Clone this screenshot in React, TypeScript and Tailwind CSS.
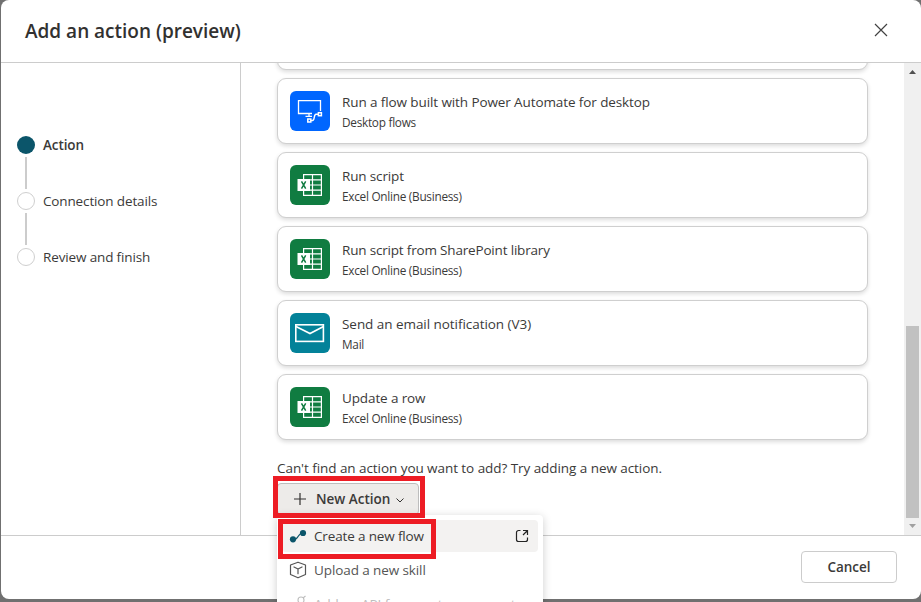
import type { ReactNode } from "react";

function DesktopFlowIcon() {
  return (
    <svg width="40" height="40" viewBox="0 0 40 40" fill="none" stroke="white" className="block">
      <path d="M22 22.5H8.5V9.6H30.5V20" strokeWidth="1.3" />
      <path d="M15.5 25.3H22M19 22.5V25" strokeWidth="1.3" />
      <rect x="17.8" y="28" width="3" height="3" strokeWidth="1.5" />
      <rect x="28.4" y="21.7" width="3" height="3" strokeWidth="1.5" />
      <path d="M21 29.5H22.5C25 29.5 23.5 23.2 26 23.2H28" strokeWidth="1.4" />
    </svg>
  );
}

function ExcelIcon() {
  return (
    <svg width="40" height="40" viewBox="0 0 40 40" fill="none" className="block">
      <path d="M13.6 9.6H31.4V30.4H13.6ZM22.5 9.6V30.4M13.6 14.8H31.4M13.6 20H31.4M13.6 25.2H31.4" stroke="white" strokeWidth="1.2" />
      <rect x="7.5" y="14" width="12.5" height="12" fill="white" />
      <path d="M11.5 16.4L15.7 23.6M15.7 16.4L11.5 23.6" stroke="#107c41" strokeWidth="1.5" />
    </svg>
  );
}

function MailIcon() {
  return (
    <svg width="40" height="40" viewBox="0 0 40 40" fill="none" stroke="white" strokeWidth="1.6" className="block">
      <rect x="5.8" y="11.8" width="27.6" height="16.6" />
      <path d="M6 13.5L20 20.5L33.5 13.5" />
    </svg>
  );
}

type CardProps = { title: string; sub: string; color: string; icon: ReactNode; spacing: string };

function Card({ title, sub, color, icon, spacing }: CardProps) {
  return (
    <div className="flex h-[66px] shrink-0 items-center rounded-[9px] border border-[#cfcfcf] bg-white px-3 shadow-[0_2px_4px_rgba(0,0,0,0.14)]">
      <div className={`size-10 shrink-0 overflow-hidden rounded-md ${color}`}>{icon}</div>
      <div className="ml-3 pt-px whitespace-nowrap">
        <div className={`text-[13.5px] leading-5 ${spacing}`}>{title}</div>
        <div className="text-[11.8px] leading-5 tracking-[-0.27px]">{sub}</div>
      </div>
    </div>
  );
}

function Step({ label, active, last }: { label: string; active?: boolean; last?: boolean }) {
  return (
    <div className={last ? "" : "h-14"}>
      <div className="flex h-[18px] items-center gap-2">
        <span className={`size-[18px] rounded-full ${active ? "bg-[#0b556a]" : "border border-[#cfcfcf]"}`} />
        <span className={`text-[13.5px] leading-[18px] whitespace-nowrap ${active ? "font-semibold tracking-[-0.1px]" : "tracking-[-0.14px]"}`}>{label}</span>
      </div>
      {!last && <div className="mt-[3px] ml-2 h-8 w-0.5 bg-[#cccccc]" />}
    </div>
  );
}

function ActionMenu() {
  return (
    <div className="absolute top-[515px] left-[277px] h-[110px] w-[266px] rounded bg-white p-[5px] shadow-[0_2px_10px_rgba(0,0,0,0.2)]">
      <div className="flex h-8 items-center rounded bg-[#f3f2f1] pr-2 pl-[7px]">
        <svg width="18" height="18" viewBox="0 0 18 18" className="shrink-0">
          <path d="M4 12.5C10 13.5 8 6 14 6" fill="none" stroke="#0b556a" strokeWidth="1.2" />
          <circle cx="4" cy="12.3" r="3.1" fill="#0b556a" />
          <circle cx="14" cy="6" r="3.1" fill="#0b556a" />
        </svg>
        <span className="ml-[7px] text-[13.5px] tracking-[-0.15px]">Create a new flow</span>
        <svg width="16" height="16" viewBox="0 0 16 16" fill="none" stroke="#242424" strokeWidth="1.2" className="ml-auto">
          <path d="M6.5 2.5H4.5A2 2 0 0 0 2.5 4.5V11.5A2 2 0 0 0 4.5 13.5H11.5A2 2 0 0 0 13.5 11.5V9.5M9 2.5H13.5V7M13.5 2.5L9 7" />
        </svg>
      </div>
      <div className="mt-0.5 flex h-8 items-center pl-[7px]">
        <svg width="18" height="18" viewBox="0 0 18 18" fill="none" stroke="#555" strokeWidth="1.2" strokeLinejoin="round" className="shrink-0">
          <path d="M9 1.2L16.5 4V13.5L9 16.8L1.5 13.5V4ZM5 6L9 8L13 6M9 8V12.7" strokeLinecap="round" />
        </svg>
        <span className="ml-[7px] text-[13.5px] tracking-[-0.1px] text-[#555]">Upload a new skill</span>
      </div>
      <div className="mt-0.5 flex h-8 items-center pl-[7px] text-[#bdbdbd]">
        <svg width="18" height="18" viewBox="0 0 18 18" fill="none" stroke="currentColor" strokeWidth="1.1" className="shrink-0">
          <circle cx="12" cy="5" r="3" />
          <path d="M14 3L16.5 1M10 8L8 11" />
        </svg>
        <span className="ml-[7px] text-[13.5px] whitespace-nowrap tracking-[-0.1px]">Add an API for a custom connector</span>
      </div>
    </div>
  );
}

export default function App() {
  return (
    <div className="relative h-[602px] w-[921px] overflow-hidden bg-[#707070] pl-px font-['Open_Sans','Noto_Sans',sans-serif] text-[#3b3a39]">
      <div className="flex h-[599px] flex-col overflow-hidden rounded-lg bg-white">
        <header className="flex h-[63px] shrink-0 items-center justify-between border-b border-[#cccccc] pr-8 pl-6">
          <h1 className="text-[19px] font-semibold tracking-[-0.01px] text-[#323130]">Add an action (preview)</h1>
          <svg width="16" height="16" viewBox="0 0 16 16" fill="none" stroke="#424242" strokeWidth="1.2" className="mb-0.5">
            <path d="M2 2L14 14M14 2L2 14" />
          </svg>
        </header>
        <main className="flex h-[472px] shrink-0">
          <nav className="w-60 shrink-0 border-r border-[#cccccc] pt-[73px] pl-4">
            <Step label="Action" active />
            <Step label="Connection details" />
            <Step label="Review and finish" last />
          </nav>
          <section className="flex-1 overflow-hidden pr-9 pl-9">
            <div className="-mt-[59px] flex flex-col gap-2">
              <Card title="" sub="" color="" icon={null} spacing="" />
              <Card title="Run a flow built with Power Automate for desktop" sub="Desktop flows" color="bg-[#0066ff]" icon={<DesktopFlowIcon />} spacing="tracking-[-0.1px]" />
              <Card title="Run script" sub="Excel Online (Business)" color="bg-[#107c41]" icon={<ExcelIcon />} spacing="tracking-[-0.15px]" />
              <Card title="Run script from SharePoint library" sub="Excel Online (Business)" color="bg-[#107c41]" icon={<ExcelIcon />} spacing="tracking-[-0.18px]" />
              <Card title="Send an email notification (V3)" sub="Mail" color="bg-[#038299]" icon={<MailIcon />} spacing="tracking-[-0.05px]" />
              <Card title="Update a row" sub="Excel Online (Business)" color="bg-[#107c41]" icon={<ExcelIcon />} spacing="tracking-[-0.12px]" />
            </div>
            <p className="mt-[18px] text-[13.5px] leading-5 tracking-[-0.06px] whitespace-nowrap">Can't find an action you want to add? Try adding a new action.</p>
            <button className="mt-[5px] flex h-8 w-[142px] items-center rounded border border-[#bdbdbd] bg-[#edebe9] pl-[15px]">
              <svg width="14" height="14" viewBox="0 0 14 14" stroke="#323130" strokeWidth="1.2">
                <path d="M1 7H13M7 1V13" />
              </svg>
              <span className="ml-[9px] text-[13.5px] font-semibold">New Action</span>
              <svg width="10" height="10" viewBox="0 0 10 10" fill="none" stroke="#323130" className="mt-0.5 ml-[5px]">
                <path d="M1.5 3.5L5 7L8.5 3.5" />
              </svg>
            </button>
          </section>
          <div className="flex w-[17px] shrink-0 flex-col items-center bg-[#f0f0f0]">
            <svg width="17" height="17" viewBox="0 0 17 17"><path d="M5 11L8.5 7L12 11Z" fill="#505050" /></svg>
            <div className="mt-[246px] h-[192px] w-[13px] bg-[#c1c1c1]" />
            <svg width="17" height="17" viewBox="0 0 17 17"><path d="M5 6L8.5 10L12 6Z" fill="#a0a0a0" /></svg>
          </div>
        </main>
        <footer className="flex flex-1 items-start justify-end border-t border-[#cccccc] pt-[15px] pr-6">
          <button className="h-8 w-24 rounded border border-[#cccccc] text-[13.5px] font-semibold">Cancel</button>
        </footer>
      </div>
      <ActionMenu />
      <div className="absolute top-[476px] left-[273px] h-[42px] w-[152px] border-5 border-[#ed1c24]" />
      <div className="absolute top-[519px] left-[278px] h-10 w-[158px] border-5 border-[#ed1c24]" />
    </div>
  );
}
